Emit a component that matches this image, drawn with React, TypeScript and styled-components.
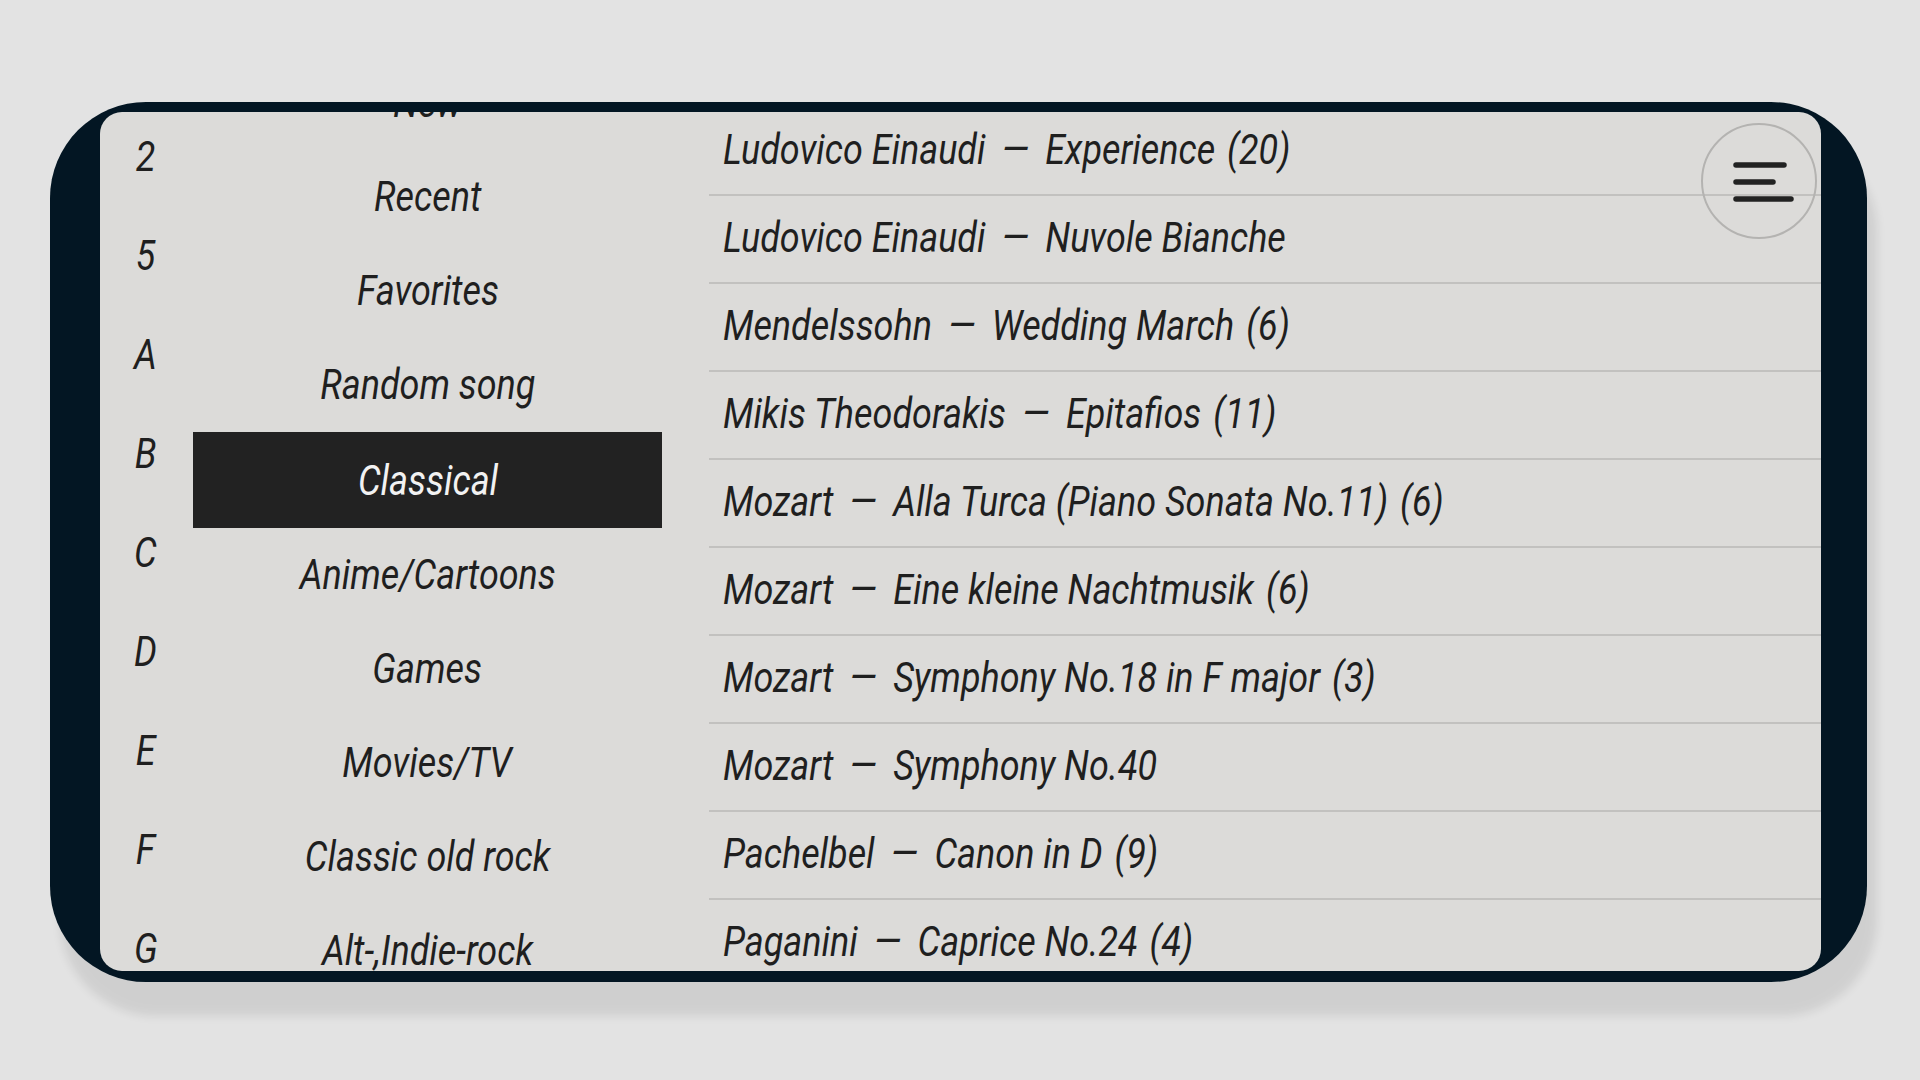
import React from "react";
import styled, { createGlobalStyle } from "styled-components";

const GlobalStyle = createGlobalStyle`
  html, body {
    margin: 0;
    padding: 0;
    background: #e3e3e3;
  }
  body {
    font-family: Roboto, "Noto Sans", "DejaVu Sans", sans-serif;
  }
  * { box-sizing: border-box; }
`;

const SQUEEZE = 0.855;

const Page = styled.div`
  width: 1920px;
  height: 1080px;
  padding: 102px 0 0 50px;
  overflow: hidden;
`;

const Phone = styled.div`
  width: 1817px;
  height: 880px;
  background: #031623;
  border-radius: 96px;
  padding: 10px 46px 11px 50px;
  box-shadow: 10px 34px 10px rgba(0, 0, 0, 0.085);
`;

const Screen = styled.div`
  position: relative;
  height: 100%;
  background: #dcdbd9;
  border-radius: 22px;
  overflow: hidden;
  display: grid;
  grid-template-columns: 93px 469px 1fr;
  align-items: start;
  color: #1f1f1f;
  font-style: italic;
  font-size: 42px;
`;

/* condensed italic face: the narrow glyphs are rendered by squeezing Roboto Italic */
const Narrow = styled.span<{ $origin?: "left" | "center" }>`
  display: inline-block;
  white-space: nowrap;
  transform: scaleX(${SQUEEZE});
  transform-origin: ${(p) => p.$origin ?? "left"} center;
`;

const IndexCol = styled.div`
  display: flex;
  flex-direction: column;
  margin-top: -5px;
  padding-right: 2px;
`;

const IndexLetter = styled.div`
  height: 99px;
  display: flex;
  align-items: center;
  justify-content: center;
`;

const CategoryCol = styled.div`
  display: flex;
  flex-direction: column;
  margin-top: -57px;
`;

const Category = styled.div<{ $active?: boolean }>`
  height: 94px;
  display: flex;
  align-items: center;
  justify-content: center;
  background: ${(p) => (p.$active ? "#222222" : "transparent")};
  color: ${(p) => (p.$active ? "#f2f2f2" : "#1f1f1f")};
  ${(p) => (p.$active ? "height: 96px; margin: 1px 0 -1px;" : "")}
`;

const SongList = styled.div`
  display: flex;
  flex-direction: column;
  margin-left: 47px;
  margin-top: -4px;
`;

const SongRow = styled.div`
  height: 88px;
  display: flex;
  align-items: center;
  padding: 0 0 4px 14px;
  border-bottom: 2px solid #c2c1bf;
`;

const Dash = styled.span`
  margin: 0 19px;
`;

const Count = styled.span`
  margin-left: 14px;
`;

const MenuButton = styled.button`
  position: absolute;
  top: 11px;
  right: 4px;
  width: 116px;
  height: 116px;
  border-radius: 50%;
  border: 2px solid #b4b3b1;
  background: transparent;
  padding: 0;
  display: flex;
  align-items: center;
  justify-content: center;
  cursor: pointer;
`;

const letters = ["2", "5", "A", "B", "C", "D", "E", "F", "G"];

const categories = [
  "New",
  "Recent",
  "Favorites",
  "Random song",
  "Classical",
  "Anime/Cartoons",
  "Games",
  "Movies/TV",
  "Classic old rock",
  "Alt-,Indie-rock",
];

type Song = { artist: string; title: string; count?: number };

const songs: Song[] = [
  { artist: "Ludovico Einaudi", title: "Experience", count: 20 },
  { artist: "Ludovico Einaudi", title: "Nuvole Bianche" },
  { artist: "Mendelssohn", title: "Wedding March", count: 6 },
  { artist: "Mikis Theodorakis", title: "Epitafios", count: 11 },
  { artist: "Mozart", title: "Alla Turca (Piano Sonata No.11)", count: 6 },
  { artist: "Mozart", title: "Eine kleine Nachtmusik", count: 6 },
  { artist: "Mozart", title: "Symphony No.18 in F major", count: 3 },
  { artist: "Mozart", title: "Symphony No.40" },
  { artist: "Pachelbel", title: "Canon in D", count: 9 },
  { artist: "Paganini", title: "Caprice No.24", count: 4 },
];

const MenuIcon = () => (
  <svg width="112" height="112" viewBox="0 0 112 112" aria-hidden>
    <g stroke="#222" strokeWidth="5.5" strokeLinecap="round">
      <line x1="33" y1="40" x2="81" y2="40" />
      <line x1="33" y1="57" x2="70" y2="57" />
      <line x1="33" y1="74" x2="88" y2="74" />
    </g>
  </svg>
);

export default function App() {
  return (
    <>
      <GlobalStyle />
      <Page>
        <Phone>
          <Screen>
            <IndexCol>
              {letters.map((l) => (
                <IndexLetter key={l}>
                  <Narrow $origin="center">{l}</Narrow>
                </IndexLetter>
              ))}
            </IndexCol>
            <CategoryCol>
              {categories.map((c) => (
                <Category key={c} $active={c === "Classical"}>
                  <Narrow $origin="center">{c}</Narrow>
                </Category>
              ))}
            </CategoryCol>
            <SongList>
              {songs.map((s, i) => (
                <SongRow key={i}>
                  <Narrow>
                    <span>{s.artist}</span>
                    <Dash>—</Dash>
                    <span>{s.title}</span>
                    {s.count !== undefined && <Count>({s.count})</Count>}
                  </Narrow>
                </SongRow>
              ))}
            </SongList>
            <MenuButton aria-label="Menu">
              <MenuIcon />
            </MenuButton>
          </Screen>
        </Phone>
      </Page>
    </>
  );
}
